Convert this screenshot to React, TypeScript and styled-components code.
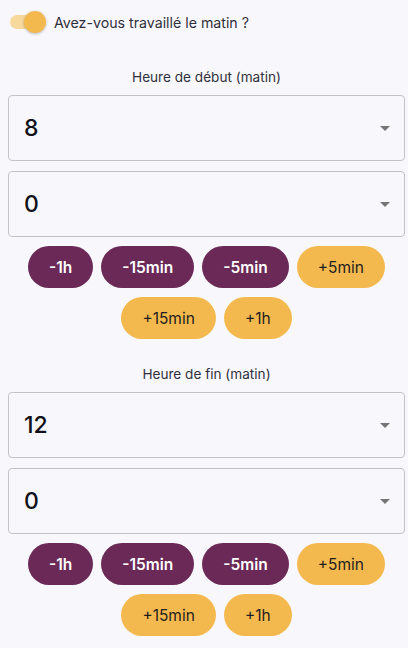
import React, { useState } from 'react'
import styled, { createGlobalStyle } from 'styled-components'

const GlobalStyle = createGlobalStyle`
    body {
        margin: 0;
        background: #f8f8fc;
        font-family: 'Inter', 'Liberation Sans', sans-serif;
    }
`

const Page = styled.div`
    padding: 0 3px 0 8px;
`

const ToggleRow = styled.label`
    display: flex;
    align-items: center;
    height: 44px;
    margin-bottom: 23px;
    cursor: pointer;
`

const Track = styled.span`
    position: relative;
    width: 34px;
    height: 14px;
    margin: 0 10px 0 2px;
    border-radius: 7px;
    background: #f7d89d;
`

const Thumb = styled.span<{ on: boolean }>`
    position: absolute;
    top: -4px;
    left: ${(props) => (props.on ? 14 : -3)}px;
    width: 22px;
    height: 22px;
    border-radius: 50%;
    background: #f4b94e;
    box-shadow: 0 1px 3px rgba(0, 0, 0, 0.25);
    transition: left 0.2s;
`

const ToggleText = styled.span`
    font-size: 14.2px;
    color: #2f2f3a;
`

const Section = styled.div`
    & + & {
        margin-top: 25px;
    }
`

const Label = styled.div`
    font-size: 13.6px;
    line-height: 20px;
    color: #30303c;
    text-align: center;
    margin-bottom: 8px;
`

const SelectBox = styled.div`
    position: relative;
    display: flex;
    align-items: center;
    box-sizing: border-box;
    height: 66px;
    padding: 0 15px;
    border: 1px solid #c3c3c8;
    border-radius: 4px;
    font-size: 23px;
    font-weight: 500;
    color: #111118;
    & + & {
        margin-top: 10px;
    }
`

const Arrow = styled.svg`
    position: absolute;
    right: 7px;
    top: 50%;
    margin-top: -12px;
    width: 24px;
    height: 24px;
    fill: #757575;
`

const Buttons = styled.div`
    display: flex;
    flex-wrap: wrap;
    justify-content: center;
    gap: 9px 8px;
    margin-top: 9px;
`

const Step = styled.button<{ plus: boolean }>`
    height: 42px;
    padding: 0 21px;
    border: none;
    border-radius: 21px;
    font-family: 'Inter', sans-serif;
    font-size: 15.5px;
    font-weight: ${(props) => (props.plus ? 400 : 600)};
    background: ${(props) => (props.plus ? '#f4b94e' : '#6a2956')};
    color: ${(props) => (props.plus ? '#1f1f1f' : '#ffffff')};
    cursor: pointer;
`

const steps = ['-1h', '-15min', '-5min', '+5min', '+15min', '+1h']

const TimeBlock: React.FC<{ label: string; hour: number; minute: number }> = ({
    label,
    hour,
    minute,
}) => (
    <Section>
        <Label>{label}</Label>
        {[hour, minute].map((value, i) => (
            <SelectBox key={i}>
                {value}
                <Arrow viewBox="0 0 24 24">
                    <path d="M7 10l5 5 5-5z" />
                </Arrow>
            </SelectBox>
        ))}
        <Buttons>
            {steps.map((s) => (
                <Step key={s} plus={s.startsWith('+')}>
                    {s}
                </Step>
            ))}
        </Buttons>
    </Section>
)

const App: React.FC = () => {
    const [on, setOn] = useState(true)

    return (
        <Page>
            <GlobalStyle />
            <ToggleRow onClick={() => setOn(!on)}>
                <Track>
                    <Thumb on={on} />
                </Track>
                <ToggleText>Avez-vous travaillé le matin ?</ToggleText>
            </ToggleRow>
            <TimeBlock label="Heure de début (matin)" hour={8} minute={0} />
            <TimeBlock label="Heure de fin (matin)" hour={12} minute={0} />
        </Page>
    )
}

export default App
